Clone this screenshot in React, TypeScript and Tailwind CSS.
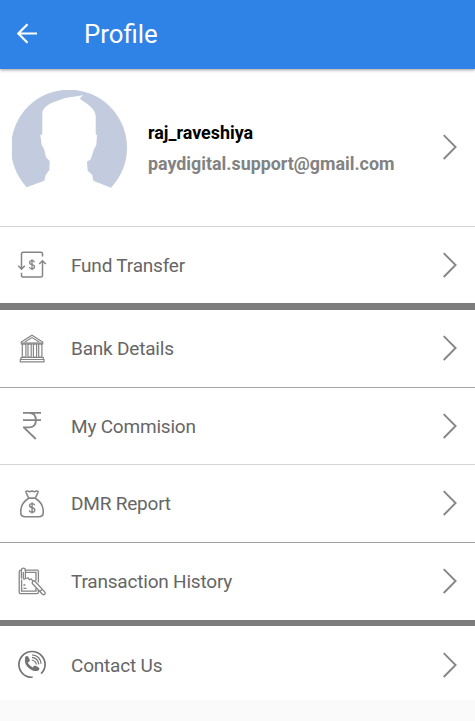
import type { ReactNode } from 'react';

interface MenuItem {
    label: string;
    icon: ReactNode;
    className: string;
}

function Icon({ children }: { children: ReactNode }) {
    return (
        <svg
            viewBox="0 0 32 32"
            className="h-8 w-8 shrink-0"
            fill="none"
            stroke="#858585"
            strokeWidth="1.5"
        >
            {children}
        </svg>
    );
}

function ChevronRight() {
    return (
        <svg
            viewBox="0 0 16 28"
            className="mb-px h-7 w-4 shrink-0"
            fill="none"
            stroke="#868686"
            strokeWidth="1.9"
        >
            <path d="M1.7 2.2 13.6 14 1.7 26" />
        </svg>
    );
}

const transferIcon = (
    <Icon>
        <path d="M26.5 7.5V5a1.7 1.7 0 0 0-1.7-1.7H7.2A1.7 1.7 0 0 0 5.5 5v15" />
        <path d="m2.3 16.8 3.2 3.3 3.3-3.3" />
        <path d="M5.5 23.8v2.6A1.7 1.7 0 0 0 7.2 28.1h17.6a1.7 1.7 0 0 0 1.7-1.7V12" />
        <path d="m23.2 15 3.3-3.3 3.3 3.3" />
        <path
            d="M18.4 13.2c-.3-1-1.2-1.5-2.4-1.5-1.4 0-2.4.8-2.4 2s.9 1.7 2.4 2c1.6.3 2.5.9 2.5 2.1s-1 2-2.5 2c-1.4 0-2.4-.6-2.6-1.8M16 10.2v11.1"
            strokeWidth="1.3"
        />
    </Icon>
);

const bankIcon = (
    <Icon>
        <path d="M5.8 9h20.400v2H5.800z" fill="#b5b5b5" stroke="none" />
        <g strokeWidth="1.2">
            <path d="M5.3 9 16 2.3 26.7 9v2H5.3zM8.8 9 16 4.6 23.2 9" />
            <path d="M6.3 11h3.6v13H6.3zM12 11h3.2v13H12zM17.4 11h3.2v13h-3.2zM22.7 11h3.2v13h-3.2z" />
            <path d="M5 24.5h22.3v2H5zM4.3 26.5H28v2.3H4.3z" />
        </g>
    </Icon>
);

const rupeeIcon = (
    <Icon>
        <path
            d="M7 2.9h18M7 10.1h18M7 17.4h5.8c4.6 0 7.1-2.8 7.1-7.2S17.4 2.9 12.8 2.9M7.8 17.4 19.8 29"
            strokeWidth="1.8"
        />
    </Icon>
);

const moneyBagIcon = (
    <Icon>
        <g strokeLinejoin="round" strokeWidth="1.6">
            <path d="M12.5 9.6 10 4.5c-.4-1 .4-1.7 1.4-1.4l2.3.7 2.3-.7 2.3.7 2.3-.7c1-.3 1.8.4 1.4 1.4l-2.5 5.1" />
            <path d="M12 10.1h8M12.4 10.5C7.2 13.5 4.7 18.8 4.7 24.2c0 3.1 1.6 4.6 4.7 4.6h13.2c3.1 0 4.7-1.5 4.7-4.6 0-5.4-2.5-10.7-7.7-13.7" />
            <path
                d="M18.7 17.3c-.3-1.1-1.3-1.7-2.6-1.7-1.5 0-2.6.8-2.6 2 0 1.3 1 1.8 2.6 2.1s2.7.9 2.7 2.3-1.1 2.2-2.7 2.2-2.6-.7-2.8-1.9M16.1 14.2v11.4"
                strokeWidth="1.4"
            />
        </g>
    </Icon>
);

const historyIcon = (
    <Icon>
        <g strokeWidth="1.3">
            <path d="M8.7 4.1H21a1.4 1.4 0 0 1 1.4 1.4v11M3.2 11V6a1.8 1.8 0 0 1 1.8-1.8M22.4 24v2.2a1.4 1.4 0 0 1-1.4 1.4H4.6a1.4 1.4 0 0 1-1.4-1.4V11" />
            <path d="M9 6.4h11v8.3M20 22v3.2H5.6V13.5" />
            <path d="M5.4 12.5V4.2a2 2 0 0 1 4 0v8.2a1.1 1.1 0 0 1-2.1 0V6" />
            <path d="m10 12.5 2-.8 1.4 2 2-.7 1.3 2 1.8-.2 10.4 11.3c1.2 1.7-1 3.5-2.4 2.1L16.3 17.4v-2M26.6 23l-2.5 2.3" />
            <path d="M7.4 19h2M7.4 22.3h3" />
        </g>
    </Icon>
);

const callIcon = (
    <Icon>
        <g stroke="#747474">
            <path
                d="M16.6 28.2C9 28.8 2.9 22.9 2.9 15.6a13.1 13.1 0 0 1 26.2 0c0 3.7-1.6 6.800-4 9.100"
                strokeWidth="1.7"
            />
            <g strokeLinecap="round">
                <path
                    d="M10.2 10.300C9.700 15.600 14.700 20.800 20.800 20.800"
                    strokeWidth="2.6"
                />
                <path
                    d="m10.800 8.800 1.200 2.500M18.800 18.500l2.800 1.300"
                    strokeWidth="3.6"
                />
            </g>
            <path
                d="M15.8 11c2.400.500 4.100 2.100 4.600 4.500M16 8.400c3.800.600 6.300 3.100 6.800 6.900M16.200 5.900c5 .6 8.300 3.900 8.900 8.900"
                strokeWidth="1.2"
            />
        </g>
    </Icon>
);

const menuItems: MenuItem[] = [
    {
        label: 'Fund Transfer',
        icon: transferIcon,
        className: 'h-[83px] border-b-[7px] border-[#7d7d7d]',
    },
    {
        label: 'Bank Details',
        icon: bankIcon,
        className: 'h-[78px] border-b border-[#a6a6a6]',
    },
    {
        label: 'My Commision',
        icon: rupeeIcon,
        className: 'h-[77px] border-b border-[#d4d4d4]',
    },
    {
        label: 'DMR Report',
        icon: moneyBagIcon,
        className: 'h-[78px] border-b border-[#a0a0a0]',
    },
    {
        label: 'Transaction History',
        icon: historyIcon,
        className: 'h-[83px] border-b-[6px] border-[#7d7d7d]',
    },
    { label: 'Contact Us', icon: callIcon, className: 'h-[74px] pt-1' },
];

export default function App() {
    return (
        <div className="min-h-screen bg-[#fafafa] font-[Roboto,sans-serif]">
            <header className="relative flex h-[69px] items-center bg-[#3083e6] pl-[17px] text-white shadow-[0_1px_3px_rgba(0,0,0,0.4)]">
                <svg
                    viewBox="0 0 22 22"
                    className="mb-0.5 h-[22px] w-[22px]"
                    fill="none"
                    stroke="currentColor"
                    strokeWidth="2.2"
                >
                    <path d="M20 10.5H1.5M10.5 1.2 1.3 10.5l9.2 9.3" />
                </svg>
                <h1 className="ml-[45px] text-[25.8px]">Profile</h1>
            </header>

            <main className="bg-white">
                <section className="flex h-[158px] items-center border-b border-[#d4d4d4] pr-[17px] pl-3">
                    <svg viewBox="0 0 116 116" className="h-29 w-29">
                        <path
                            d="M14.7 97.3A58 58 0 1 1 99 97.7L81.3 90.7 80.3 85 75.7 80.7 75 71.7 78.7 69.3 82 59.3 84.3 55 85 45 83.7 44.3V26C83 19 76 14 68 9L69 7 71.3 5 68 5.7 54.7 7.7C47 10 39 12.5 34.7 16 31.5 18.5 30.3 21 30.3 23.3V44.3L28.3 45 29.7 55 32 59 34 67.3 37.7 71 37.3 80 33.7 85 32.3 90.7z"
                            fill="#c2ccde"
                        />
                    </svg>
                    <div className="ml-5 flex-1">
                        <p className="text-[17.9px] leading-[31px] font-bold text-black">
                            raj_raveshiya
                        </p>
                        <p className="text-[17.85px] leading-[31px] font-bold text-[#828282]">
                            paydigital.support@gmail.com
                        </p>
                    </div>
                    <ChevronRight />
                </section>

                <nav>
                    {menuItems.map((item) => (
                        <a
                            key={item.label}
                            className={`flex items-center pr-[17px] pl-4 ${item.className}`}
                        >
                            {item.icon}
                            <span className="mt-0.5 ml-[23px] flex-1 text-[19px] tracking-[-0.2px] text-[#666]">
                                {item.label}
                            </span>
                            <ChevronRight />
                        </a>
                    ))}
                </nav>
            </main>
        </div>
    );
}
